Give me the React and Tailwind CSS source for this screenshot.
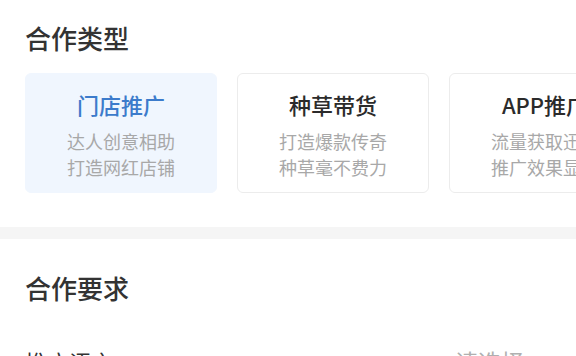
import React from 'react';

const types = [
  { title: '门店推广', lines: ['达人创意相助', '打造网红店铺'], active: true },
  { title: '种草带货', lines: ['打造爆款传奇', '种草毫不费力'] },
  { title: 'APP推广', lines: ['流量获取迅速', '推广效果显著'] },
];

const TypeCard = ({ item }) => (
  <div
    className={
      'w-[192px] h-[120px] shrink-0 rounded-md flex flex-col items-center pt-[15px] ' +
      (item.active ? 'bg-[#f0f6fe] border border-[#f0f6fe]' : 'bg-white border border-[#ececec]')
    }
  >
    <div
      className={
        'text-[22px] leading-[30px] font-medium whitespace-nowrap ' +
        (item.active ? 'text-[#3c7bcb]' : 'text-[#2b2b2b]')
      }
    >
      {item.title}
    </div>
    <div className="mt-[9px] text-[18px] leading-[26px] text-[#a8a8a8] text-center whitespace-nowrap">
      {item.lines.map((l) => (
        <div key={l}>{l}</div>
      ))}
    </div>
  </div>
);

export default function App() {
  return (
    <div
      className="w-[576px] h-[356px] overflow-hidden bg-white"
      style={{ fontFamily: '"Noto Sans CJK SC", "Noto Sans", sans-serif' }}
    >
      {/* 合作类型 */}
      <div className="pt-[20px] pb-[34px]">
        <h2 className="pl-[25px] text-[26px] leading-[36px] font-medium text-[#333]">合作类型</h2>
        <div className="mt-[17px] pl-[25px] flex gap-[20px] overflow-hidden">
          {types.map((t) => (
            <TypeCard key={t.title} item={t} />
          ))}
        </div>
      </div>

      <div className="h-[12px] bg-[#f5f5f5]" />

      {/* 合作要求 */}
      <div className="pt-[31px]">
        <h2 className="pl-[25px] text-[26px] leading-[36px] font-medium text-[#333]">合作要求</h2>
        <div className="mt-[40px] pl-[25px] pr-[10px] flex items-center justify-between">
          <span className="text-[22px] leading-[30px] text-[#333]">推广语言</span>
          <span className="w-[111px] flex items-center justify-between text-[23px] leading-[30px] text-[#b0b0b0]">
            请选择
            <span className="text-[22px]">›</span>
          </span>
        </div>
      </div>
    </div>
  );
}
